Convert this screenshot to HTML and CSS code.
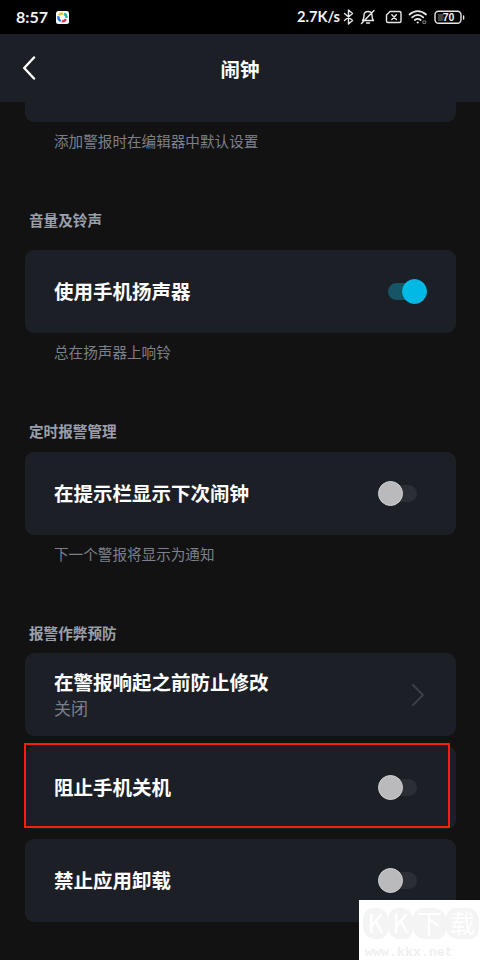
FILE: index.html
```html
<!DOCTYPE html>
<html lang="zh-CN">
<head>
<meta charset="utf-8">
<title>闹钟</title>
<link rel="stylesheet" href="styles.css">
</head>
<body>
<div class="screen">
  <div class="status">
    <span class="time">8:57</span>
    <svg class="app" width="13" height="13" viewBox="0 0 13 13"><rect width="13" height="13" rx="2.5" fill="#fff"/><g fill="none" stroke-width="2.4"><path d="M2.9 4.2A4.2 4.2 0 0 1 7 2.5" stroke="#f5c51c"/><path d="M8 2.7A4.2 4.2 0 0 1 10.4 6.8" stroke="#18b9a0"/><path d="M10 8.2A4.2 4.2 0 0 1 5.8 10.3" stroke="#e9304f"/><path d="M4.8 10A4.2 4.2 0 0 1 2.5 5.3" stroke="#2873e8"/></g></svg>
    <span class="speed">2.7K/s</span>
    <svg class="indicators" width="128" height="20" viewBox="0 0 128 20" fill="none" stroke="#e8e8e8" stroke-width="1.4" stroke-linecap="round" stroke-linejoin="round">
      <path d="M4.5 6.500 12.500 13.500 8.500 17V3L12.500 6.500 4.500 13.500"/>
      <path d="M22.500 13.500c1.500-1.300 1.500-3 1.500-5 0-5.300 8-5.300 8 0 0 2 0 3.700 1.500 5zM26.500 16h3M34 3.500 21.500 16.500"/>
      <path d="M50 4.500H59.500Q61 4.500 61 6V14Q61 15.500 59.500 15.500H48Q46.500 15.500 46.500 14V8zM51.800 7.800l4.600 4.600M56.400 7.800l-4.600 4.600"/>
      <path d="M69.500 7.500c5-4.500 11.500-4.500 16.500 0M72.200 10.300c3.400-3 7.700-3 11.100 0M74.800 13c2-1.600 3.900-1.600 5.900 0" stroke-width="1.800"/>
      <circle cx="77.700" cy="15.500" r="1.100" fill="#e8e8e8" stroke="none"/>
      <rect x="83.300" y="14" width="2.400" height="2.600" stroke-width=".8" stroke="#999"/>
      <rect x="95" y="4.300" width="26" height="12" rx="3.500"/>
      <path d="M123.600 9v3"/>
      <rect x="98" y="7" width="5.500" height="7" fill="#444" stroke="none"/>
      <text class="battery" x="108.500" y="14.100" text-anchor="middle">70</text>
    </svg>
  </div>
  <header class="header">
    <svg class="back" width="14" height="24" viewBox="0 0 14 24"><path d="M12 1.500 2.200 12 12 22.500" fill="none" stroke="#fff" stroke-width="2.400" stroke-linecap="round" stroke-linejoin="round"/></svg>
    <h1 class="heading">闹钟</h1>
  </header>
  <main class="content">
    <div class="card card-tail"></div>
    <p class="hint">添加警报时在编辑器中默认设置</p>

    <h2 class="section section-volume">音量及铃声</h2>
    <div class="card"><span class="label">使用手机扬声器</span><span class="switch on"></span></div>
    <p class="hint">总在扬声器上响铃</p>

    <h2 class="section">定时报警管理</h2>
    <div class="card"><span class="label">在提示栏显示下次闹钟</span><span class="switch"></span></div>
    <p class="hint">下一个警报将显示为通知</p>

    <h2 class="section">报警作弊预防</h2>
    <div class="stack">
      <div class="card">
        <div class="texts"><span class="label">在警报响起之前防止修改</span><span class="value">关闭</span></div>
        <svg class="chevron" width="14" height="24" viewBox="0 0 14 24"><path d="m2 2 10 10L2 22" fill="none" stroke="#3d3f47" stroke-width="1.900" stroke-linecap="round" stroke-linejoin="round"/></svg>
      </div>
      <div class="card marked"><span class="label">阻止手机关机</span><span class="switch"></span></div>
      <div class="card"><span class="label">禁止应用卸载</span><span class="switch"></span></div>
    </div>
  </main>
  <div class="watermark">
    <div class="brand"><span>K</span><span>K</span><span>下</span><span>载</span></div>
    <div class="site">www.kkx.net</div>
  </div>
</div>
</body>
</html>
```
FILE: styles.css
```css
*, *::before, *::after { box-sizing: border-box; }
body { margin: 0; background: #121213; }
.screen {
  position: relative;
  width: 480px;
  height: 960px;
  overflow: hidden;
  background: #121213;
  font-family: "Noto Sans", "Noto Sans CJK SC", sans-serif;
  color: #fff;
}
.status {
  display: flex;
  align-items: center;
  height: 34px;
  padding-left: 16px;
  background: #000;
  font-family: Lato, "Noto Sans CJK SC", sans-serif;
  font-weight: 700;
  color: #f2f2f2;
}
.time { width: 40px; font-size: 16px; line-height: 34px; }
.speed { width: 45px; margin-left: 228px; font-size: 14.600px; line-height: 34px; white-space: nowrap; }
.app { flex: none; }
.indicators { flex: none; margin-left: -2px; }
.battery { font: 700 10.500px "Liberation Sans", sans-serif; fill: #f2f2f2; stroke: none; }
.header {
  display: grid;
  grid-template-columns: 60px 1fr 60px;
  align-items: center;
  height: 68px;
  background: #1c1f26;
}
.back { margin-left: 22px; }
.heading {
  margin: 2px 0 0;
  text-align: center;
  font: 700 19.500px/28px "Noto Sans CJK SC", sans-serif;
}
.content {
  padding: 0 24.500px 0 24.500px;
  font-family: "Noto Sans CJK SC", sans-serif;
}
.card {
  display: flex;
  align-items: center;
  justify-content: space-between;
  height: 83px;
  padding: 0 28.500px 0 29.500px;
  border-radius: 9px;
  background: #1c1f26;
}
.card-tail { height: 20px; border-radius: 0 0 9px 9px; }
.label { margin-top: -1px; font-size: 19.500px; font-weight: 700; line-height: 26px; }
.hint {
  margin: 9px 0 0 29.500px;
  font-size: 14.600px;
  line-height: 20px;
  color: #7d808a;
}
.section {
  margin: 58px 0 9px 4.500px;
  font-size: 14.600px;
  font-weight: 700;
  line-height: 22px;
  color: #9b9faa;
}
.section-volume { margin-bottom: 19px; }
.hint + .section:not(.section-volume) { margin-bottom: 9.500px; }
.switch {
  display: flex;
  align-items: center;
  width: 39px;
  height: 25px;
  margin-right: 10px;
}
.switch::before {
  content: "";
  flex: none;
  width: 25px;
  height: 25px;
  border: 1px solid #d0d0d0;
  border-radius: 50%;
  background: #bababc;
  z-index: 1;
}
.switch::after {
  content: "";
  flex: none;
  width: 28px;
  height: 17px;
  margin-left: -14px;
  border-radius: 9px;
  background: #2c2e36;
}
.switch.on { flex-direction: row-reverse; margin-right: 0; }
.switch.on::before { border-color: #00b9e4; background: #00b9e4; }
.switch.on::after { margin: 0 -14px 0 0; background: #155565; }
.stack { display: flex; flex-direction: column; gap: 10px; }
.texts { display: flex; flex-direction: column; padding-top: 2px; }
.value { font-size: 17px; line-height: 26px; color: #7d808a; }
.chevron { margin-right: 2px; }
.marked { position: relative; }
.marked::after {
  content: "";
  position: absolute;
  left: -.5px;
  top: -3px;
  width: 426px;
  height: 85px;
  border: 2px solid #fc1c0c;
}
.watermark {
  position: absolute;
  left: 359px;
  top: 900px;
  width: 121px;
  height: 60px;
  padding: 8px 0 0 4px;
  background: #fff;
}
.brand { display: flex; }
.brand span {
  width: 25px;
  height: 31px;
  border-radius: 10px 12px 9px 12px;
  background: #f4f4f4;
  color: #fff;
  text-align: center;
  font: 400 25px/29px "Noto Sans CJK SC", sans-serif;
}
.brand span:nth-child(n+3) { width: 33px; }
.site { margin: 6px 0 0 2px; font: 700 13.300px/16px "Liberation Mono", monospace; color: #f0f0f0; }
```
